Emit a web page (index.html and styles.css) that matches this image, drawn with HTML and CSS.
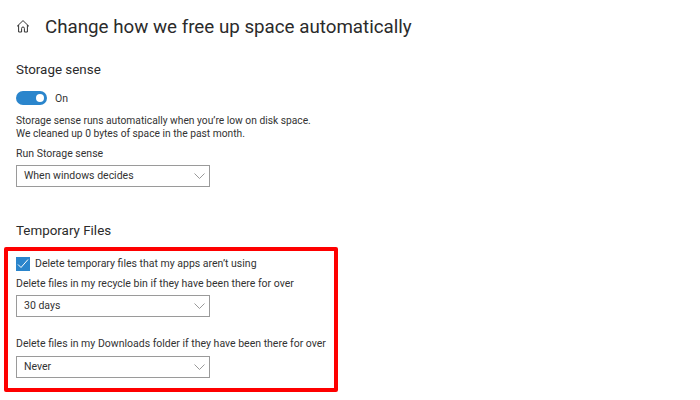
FILE: index.html
```html
<!DOCTYPE html>
<html lang="en">
<head>
  <meta charset="UTF-8" />
  <title>Storage sense</title>
  <link rel="stylesheet" href="styles.css">
</head>
<body>

  <div class="titleRow">
    <svg class="homeIcon" width="14" height="14" viewBox="0 0 14 14">
      <path d="M1 6.4 7 .6l6 5.8M2.6 5v7h3V8.4a1.4 1.4 0 0 1 2.8 0V12h3V5" />
    </svg>
    <h1>Change how we free up space automatically</h1>
  </div>

  <h2 class="storageHead">Storage sense</h2>

  <div class="toggleRow">
    <span class="toggle"><span class="knob"></span></span>
    <span class="toggleLabel">On</span>
  </div>

  <p class="info">Storage sense runs automatically when you’re low on disk space.<br>We cleaned up 0 bytes of space in the past month.</p>

  <p class="fieldLabel runLabel">Run Storage sense</p>
  <div class="select">
    <span class="selectText">When windows decides</span>
    <svg class="chevron" width="11" height="6" viewBox="0 0 11 6"><path d="M.5.5l5 5 5-5" /></svg>
  </div>

  <h2 class="tempHead">Temporary Files</h2>

  <div class="redBox">
    <div class="checkRow">
      <span class="checkbox">
        <svg width="14" height="14" viewBox="0 0 14 14"><path d="M2 7.5l3 3 7-8" /></svg>
      </span>
      <span class="checkLabel">Delete temporary files that my apps aren’t using</span>
    </div>

    <p class="fieldLabel binLabel">Delete files in my recycle bin if they have been there for over</p>
    <div class="select">
      <span class="selectText">30 days</span>
      <svg class="chevron" width="11" height="6" viewBox="0 0 11 6"><path d="M.5.5l5 5 5-5" /></svg>
    </div>

    <p class="fieldLabel downloadsLabel">Delete files in my Downloads folder if they have been there for over</p>
    <div class="select">
      <span class="selectText">Never</span>
      <svg class="chevron" width="11" height="6" viewBox="0 0 11 6"><path d="M.5.5l5 5 5-5" /></svg>
    </div>
  </div>

</body>
</html>
```

FILE: styles.css
```css
body {
  margin: 0;
  padding: 0 0 0 16px;
  height: 400px;
  box-sizing: border-box;
  overflow: hidden;
  background: #ffffff;
  color: #333333;
  font-family: Roboto, 'Noto Sans', sans-serif;
  font-size: 10.5px;
}

p {
  margin: 0;
}

.titleRow {
  display: flex;
  align-items: center;
  height: 26px;
  padding-top: 14px;
}

.homeIcon {
  margin-right: 15px;
}

.homeIcon path {
  fill: none;
  stroke: #333333;
  stroke-width: 1;
}

h1 {
  margin: 0;
  font-size: 18.75px;
  font-weight: 400;
  color: #2b2b2b;
}

h2 {
  margin: 0;
  font-size: 13.4px;
  font-weight: 400;
  line-height: 18px;
  color: #2b2b2b;
}

.storageHead {
  margin-top: 21px;
}

.toggleRow {
  display: flex;
  align-items: center;
  gap: 8px;
  margin-top: 12px;
}

.toggle {
  display: flex;
  align-items: center;
  justify-content: flex-end;
  width: 31px;
  height: 14px;
  padding-right: 3px;
  box-sizing: border-box;
  border-radius: 7px;
  background: #2a85cc;
}

.knob {
  width: 8px;
  height: 8px;
  border-radius: 50%;
  background: #ffffff;
}

.info {
  margin-top: 9px;
  font-size: 10.25px;
  line-height: 13px;
}

.fieldLabel {
  line-height: 14px;
}

.runLabel {
  margin-top: 7px;
}

.select {
  display: flex;
  align-items: center;
  justify-content: space-between;
  width: 194px;
  height: 22px;
  margin-top: 4px;
  padding: 0 4px 0 7px;
  box-sizing: border-box;
  border: 1px solid #9a9a9a;
  background: #ffffff;
}

.selectText {
  margin-bottom: 2px;
}

.chevron path {
  fill: none;
  stroke: #999999;
  stroke-width: 1;
}

.tempHead {
  margin-top: 35px;
}

.redBox {
  width: 334px;
  height: 145px;
  margin: 7px 0 0 -12px;
  padding: 6px 0 0 8px;
  box-sizing: border-box;
  border: 4px solid #fe0000;
  border-radius: 2px;
}

.checkRow {
  display: flex;
  align-items: center;
  gap: 5px;
  height: 14px;
}

.checkLabel {
  margin-bottom: 2px;
}

.checkbox {
  display: flex;
  width: 14px;
  height: 14px;
  background: #2a85cc;
}

.checkbox path {
  fill: none;
  stroke: #ffffff;
  stroke-width: 1;
}

.binLabel {
  margin-top: 6px;
}

.downloadsLabel {
  margin-top: 20px;
}

.downloadsLabel + .select {
  margin-top: 5px;
}
```
